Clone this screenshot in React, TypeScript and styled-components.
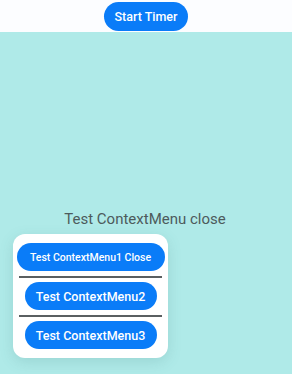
import React from "react";
import styled, { createGlobalStyle } from "styled-components";

const Global = createGlobalStyle`
  html, body { margin: 0; padding: 0; }
  body { width: 292px; height: 374px; overflow: hidden; background: #fcfdff; font-family: Roboto, "Noto Sans", sans-serif; }
`;

const Page = styled.div`
  display: flex;
  flex-direction: column;
  width: 292px;
  height: 374px;
`;

const TopBar = styled.div`
  height: 32px;
  display: flex;
  justify-content: center;
  align-items: flex-start;
  padding-top: 2px;
  box-sizing: border-box;
  background: #fcfdff;
`;

const PillButton = styled.button<{ $w: number; $h: number; $fs: number }>`
  width: ${(p) => p.$w}px;
  height: ${(p) => p.$h}px;
  border: none;
  border-radius: 999px;
  background: #0a7cf8;
  color: #fff;
  font-family: Roboto, "Noto Sans", sans-serif;
  font-weight: 500;
  font-size: ${(p) => p.$fs}px;
  padding: 0;
  display: flex;
  align-items: center;
  justify-content: center;
  white-space: nowrap;
  flex-shrink: 0;
`;

const Stage = styled.div`
  flex: 1;
  background: #afeae8;
  display: flex;
  flex-direction: column;
  padding-top: 177px;
  box-sizing: border-box;
`;

const Title = styled.div`
  text-align: center;
  font-size: 15px;
  line-height: 20px;
  color: #4d5b5c;
  padding-right: 2px;
`;

const Menu = styled.div`
  margin: 5px 0 0 13px;
  width: 155px;
  box-sizing: border-box;
  background: #ffffff;
  border-radius: 12px;
  padding: 9px 0;
  display: flex;
  flex-direction: column;
  align-items: center;
  box-shadow: 0 4px 14px rgba(60, 120, 120, 0.18);
`;

const Divider = styled.div`
  width: 143px;
  height: 2px;
  background: #5a5f61;
  margin: 5px 0 4px;
`;

export default function App() {
  return (
    <Page>
      <Global />
      <TopBar>
        <PillButton $w={84} $h={29} $fs={12.5}>Start Timer</PillButton>
      </TopBar>
      <Stage>
        <Title>Test ContextMenu close</Title>
        <Menu>
          <PillButton $w={148} $h={28} $fs={10.5}>Test ContextMenu1 Close</PillButton>
          <Divider />
          <PillButton $w={132} $h={28} $fs={12.5}>Test ContextMenu2</PillButton>
          <Divider />
          <PillButton $w={132} $h={28} $fs={12.5}>Test ContextMenu3</PillButton>
        </Menu>
      </Stage>
    </Page>
  );
}
